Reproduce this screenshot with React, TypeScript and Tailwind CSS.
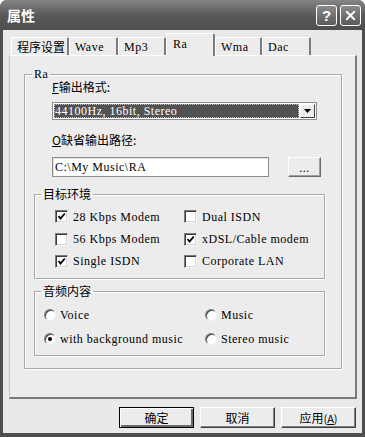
import { X } from 'lucide-react';

const latin = "font-['Liberation_Serif','Noto_Sans_CJK_SC',serif] text-[12px] tracking-[0.5px] leading-[14px]";
const cjk = "font-['Noto_Sans_CJK_SC',sans-serif] text-[12px] leading-[14px]";

const tabs = [
  { label: '程序设置', w: 'w-[58px]', cjk: true },
  { label: 'Wave', w: 'w-[49px]' },
  { label: 'Mp3', w: 'w-[48px]' },
  { label: 'Ra', w: 'w-[49px]', active: true },
  { label: 'Wma', w: 'w-[47px]' },
  { label: 'Dac', w: 'w-[49px]' },
];

const CheckBox = ({ checked, label }: { checked?: boolean; label: string }) => (
  <div className="flex items-center">
    <span className="w-[13px] h-[13px] flex items-center justify-center bg-white border border-t-[#7a7a7a] border-l-[#7a7a7a] border-r-[#f4f4f4] border-b-[#f4f4f4] shadow-[inset_1px_1px_0_#3c3c3c,inset_-1px_-1px_0_#d8d8d8]">
      {checked && (
        <svg width="9" height="9" viewBox="0 0 9 9">
          <path d="M1.5 4 L3.5 6.5 L7.8 1.5" stroke="#000" strokeWidth="1.8" fill="none" />
        </svg>
      )}
    </span>
    <span className={`ml-[5px] ${latin}`}>{label}</span>
  </div>
);

const Radio = ({ checked, label }: { checked?: boolean; label: string }) => (
  <div className="flex items-center">
    <span className="w-[12px] h-[12px] rounded-full flex items-center justify-center bg-white border border-t-[#7a7a7a] border-l-[#7a7a7a] border-r-[#f4f4f4] border-b-[#f4f4f4] shadow-[inset_1px_1px_0_#404040]">
      {checked && <span className="w-[4px] h-[4px] rounded-full bg-black" />}
    </span>
    <span className={`ml-[4px] ${latin}`}>{label}</span>
  </div>
);

const groupBorder = 'border border-[#a8a8a8] shadow-[1px_1px_0_#fff,inset_1px_1px_0_#fff]';

const App = () => {
  return (
    <div className="w-[365px] h-[437px] flex flex-col bg-[#4e4e4e] rounded-t-[7px] text-black">
      {/* title bar */}
      <div className="h-[30px] flex items-center pl-[7px] pr-[4px] rounded-t-[7px] bg-gradient-to-b from-[#858585] via-[#5a5a5a] to-[#4e4e4e]">
        <span className="font-['Noto_Sans_CJK_SC',sans-serif] text-[14px] font-bold text-white leading-[16px]">属性</span>
        <div className="ml-auto flex gap-[3px] pt-[1px]">
          <div className="w-[21px] h-[21px] rounded-[3px] border border-white bg-gradient-to-b from-[#8a8a8a] to-[#5c5c5c] flex items-center justify-center text-white font-['Liberation_Sans',sans-serif] font-bold text-[15px] leading-none">
            ?
          </div>
          <div className="w-[21px] h-[21px] rounded-[3px] border border-white bg-gradient-to-b from-[#8a8a8a] to-[#5c5c5c] flex items-center justify-center">
            <X size={15} strokeWidth={3} color="#fff" />
          </div>
        </div>
      </div>

      {/* body */}
      <div className="flex-1 mx-[3px] mb-[4px] bg-[#e9e9e9] flex flex-col">
        {/* tabs */}
        <div className="flex items-end h-[25px] pl-[8px] pt-[3px]">
          {tabs.map((t) =>
            t.active ? (
              <div
                key={t.label}
                className={`${t.w} h-[23px] -mb-[1px] relative z-10 bg-[#ececec] border-t border-l border-t-white border-l-white border-r-2 border-r-[#7c7c7c] rounded-t-[2px] pl-[6px] pt-[3px] ${latin}`}
              >
                {t.label}
              </div>
            ) : (
              <div
                key={t.label}
                className={`${t.w} h-[18px] bg-[#ececec] border-t border-l border-t-white border-l-white border-r-2 border-r-[#7c7c7c] rounded-t-[2px] pl-[5px] pt-[2px] ${t.cjk ? cjk : latin}`}
              >
                {t.label}
              </div>
            )
          )}
        </div>

        {/* panel */}
        <div className="ml-[6px] w-[348px] h-[344px] bg-[#ececec] border-t border-l border-t-white border-l-[#c4c4c4] border-r-2 border-b-2 border-r-[#7a7a7a] border-b-[#7a7a7a] pt-[11px]">
          <fieldset className={`ml-[14px] w-[318px] h-[302px] ${groupBorder}`}>
            <legend className={`ml-[7px] px-[2px] ${latin}`}>Ra</legend>

            <div className={`ml-[27px] -mt-[1px] ${cjk}`}>
              <span className="underline">F</span>输出格式:
            </div>

            <div className="ml-[27px] mt-[8px] w-[265px] h-[18px] border border-[#8e8e8e] bg-white flex p-[1px]">
              <div className="flex-1 bg-[#525252] outline outline-1 outline-dotted outline-[#bdbdbd] -outline-offset-1 text-white flex items-center pl-[1px]">
                <span className={latin}>44100Hz, 16bit, Stereo</span>
              </div>
              <div className="w-[15px] ml-[1px] bg-[#ececec] border border-t-white border-l-white border-r-[#404040] border-b-[#404040] flex items-center justify-center">
                <svg width="7" height="4" viewBox="0 0 7 4">
                  <path d="M0 0 H7 L3.5 4 Z" fill="#000" />
                </svg>
              </div>
            </div>

            <div className={`ml-[27px] mt-[13px] ${cjk}`}>
              <span className="underline">O</span>缺省输出路径:
            </div>

            <div className="ml-[27px] mt-[10px] flex items-start">
              <div className="w-[217px] h-[20px] border border-[#8e8e8e] bg-white shadow-[inset_1px_1px_0_#e0e0e0] flex items-center pl-[2px]">
                <span className={latin}>{'C:\\My Music\\RA'}</span>
              </div>
              <div className="ml-[19px] w-[33px] h-[20px] bg-[#ececec] border border-t-white border-l-white border-r-[#6a6a6a] border-b-[#6a6a6a] shadow-[inset_-1px_-1px_0_#a0a0a0] flex items-center justify-center pt-[2px]">
                <span className={latin}>...</span>
              </div>
            </div>

            <fieldset className={`ml-[9px] mt-[10px] w-[291px] h-[92px] ${groupBorder}`}>
              <legend className={`ml-[6px] px-[2px] ${cjk}`}>目标环境</legend>
              <div className="pt-[4px] pl-[20px] grid grid-cols-[129px_1fr] grid-rows-[23px_22px_22px] items-center">
                <CheckBox checked label="28 Kbps Modem" />
                <CheckBox label="Dual ISDN" />
                <CheckBox label="56 Kbps Modem" />
                <CheckBox checked label="xDSL/Cable modem" />
                <CheckBox checked label="Single ISDN" />
                <CheckBox label="Corporate LAN" />
              </div>
            </fieldset>

            <fieldset className={`ml-[9px] mt-[5px] w-[291px] h-[72px] ${groupBorder}`}>
              <legend className={`ml-[6px] px-[2px] ${cjk}`}>音频内容</legend>
              <div className="pt-[5px] pl-[9px] grid grid-cols-[161px_1fr] grid-rows-[24px_24px] items-center">
                <Radio label="Voice" />
                <Radio label="Music" />
                <Radio checked label="with background music" />
                <Radio label="Stereo music" />
              </div>
            </fieldset>
          </fieldset>
        </div>

        {/* buttons */}
        <div className="mt-[8px] flex justify-end gap-[6px] pr-[6px]">
          <div className={`w-[75px] h-[21px] bg-[#ececec] border border-black shadow-[inset_1px_1px_0_#fff,inset_-2px_-2px_0_#6a6a6a] flex items-center justify-center ${cjk}`}>
            确定
          </div>
          <div className={`w-[75px] h-[21px] bg-[#ececec] border border-t-white border-l-white border-r-[#404040] border-b-[#404040] shadow-[inset_-1px_-1px_0_#808080] flex items-center justify-center ${cjk}`}>
            取消
          </div>
          <div className={`w-[75px] h-[21px] bg-[#ececec] border border-t-white border-l-white border-r-[#404040] border-b-[#404040] shadow-[inset_-1px_-1px_0_#808080] flex items-center justify-center ${cjk}`}>
            应用<span className="text-[11px]">(<span className="underline">A</span>)</span>
          </div>
        </div>
      </div>
    </div>
  );
};

export default App;
